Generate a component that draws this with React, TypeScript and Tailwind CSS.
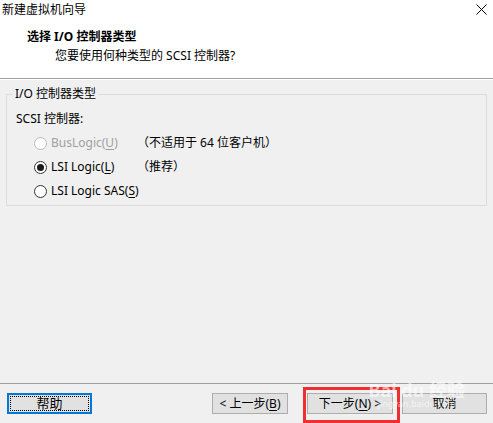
const font = "font-['Noto_Sans','Noto_Sans_CJK_SC',sans-serif]";

const Radio = ({ checked, disabled }: { checked?: boolean; disabled?: boolean }) => (
  <span
    className={`flex h-[13px] w-[13px] shrink-0 items-center justify-center rounded-full border bg-white ${
      disabled ? "border-[#bcbcbc]" : "border-[#333333]"
    }`}
  >
    {checked && <span className="h-[7px] w-[7px] rounded-full bg-[#1a1a1a]" />}
  </span>
);

const App = () => {
  const options = [
    { pre: "BusLogic(", key: "U", post: ")", note: "（不适用于 64 位客户机）", disabled: true },
    { pre: "LSI Logic(", key: "L", post: ")", note: "（推荐）", checked: true },
    { pre: "LSI Logic SAS(", key: "S", post: ")", note: "" },
  ];

  return (
    <div className={`flex h-[423px] w-[493px] flex-col overflow-hidden bg-[#f0f0f0] text-[12px] text-black ${font}`}>
      {/* header */}
      <div className="h-[79px] shrink-0 border-b border-[#a0a0a0] bg-white">
        <div className="flex h-[19px] items-center justify-between pl-[2px] pr-[6px]">
          <span className="leading-[19px]">新建虚拟机向导</span>
          <svg width="11" height="11" viewBox="0 0 11 11" className="mb-[1px]">
            <path d="M0.5 0.5 L10.5 10.5 M10.5 0.5 L0.5 10.5" stroke="#000" strokeWidth="1" />
          </svg>
        </div>
        <div className="mt-[10px] pl-[27px] font-bold leading-[16px]">选择 I/O 控制器类型</div>
        <div className="mt-[3px] pl-[55px] leading-[16px]">您要使用何种类型的 SCSI 控制器?</div>
      </div>

      {/* body */}
      <div className="flex-1 border-t border-white px-[6px] pt-[14px]">
        <div className="relative h-[112px] border border-[#dcdcdc]">
          <span className="absolute -top-[9px] left-[6px] bg-[#f0f0f0] px-[2px] leading-[16px]">I/O 控制器类型</span>
          <div className="pl-[9px] pt-[16px] leading-[16px]">SCSI 控制器:</div>
          <div className="mt-[4px] pl-[27px]">
            {options.map((o, i) => (
              <div key={i} className="flex h-[24px] items-center whitespace-nowrap">
                <Radio checked={o.checked} disabled={o.disabled} />
                <span className={`ml-[4px] w-[86px] shrink-0 ${o.disabled ? "text-[#a0a0a0]" : ""}`}>
                  {o.pre}
                  <span className="underline underline-offset-2">{o.key}</span>
                  {o.post}
                </span>
                <span>{o.note}</span>
              </div>
            ))}
          </div>
        </div>
      </div>

      {/* footer */}
      <div className="relative flex h-[40px] shrink-0 items-start border-t border-[#a0a0a0] pl-[7px] pr-[6px] pt-[9px]">
        <button className="flex h-[21px] w-[85px] items-center justify-center border-2 border-[#0078d7] bg-[#e1e1e1] p-[1px]">
          <span className="flex h-full w-full items-center justify-center border border-dotted border-black text-[13px] leading-none">
            帮助
          </span>
        </button>
        <div className="flex-1" />
        <button className="h-[21px] w-[76px] border border-[#adadad] bg-[#e1e1e1] leading-[19px]">
          &lt; 上一步(<span className="underline underline-offset-2">B</span>)
        </button>
        <div className="relative ml-[19px]">
          <button className="h-[21px] w-[86px] border border-[#adadad] bg-[#e1e1e1] leading-[19px]">
            下一步(<span className="underline underline-offset-2">N</span>) &gt;
          </button>
          <div className="pointer-events-none absolute -left-[4px] -top-[6px] h-[36px] w-[97px] border-[3px] border-[#ef2f2f]" />
        </div>
        <button className="ml-[9px] h-[21px] w-[85px] border border-[#adadad] bg-[#e1e1e1] leading-[19px]">
          取消
        </button>

        {/* watermark */}
        <div className="pointer-events-none absolute right-[28px] -top-[3px] flex flex-col items-center text-white/60">
          <span className="text-[18px] font-bold leading-[18px]">Bai du 经验</span>
          <span className="text-[9px] leading-[10px]">jingyan.baidu.com</span>
        </div>
      </div>
    </div>
  );
};

export default App;
